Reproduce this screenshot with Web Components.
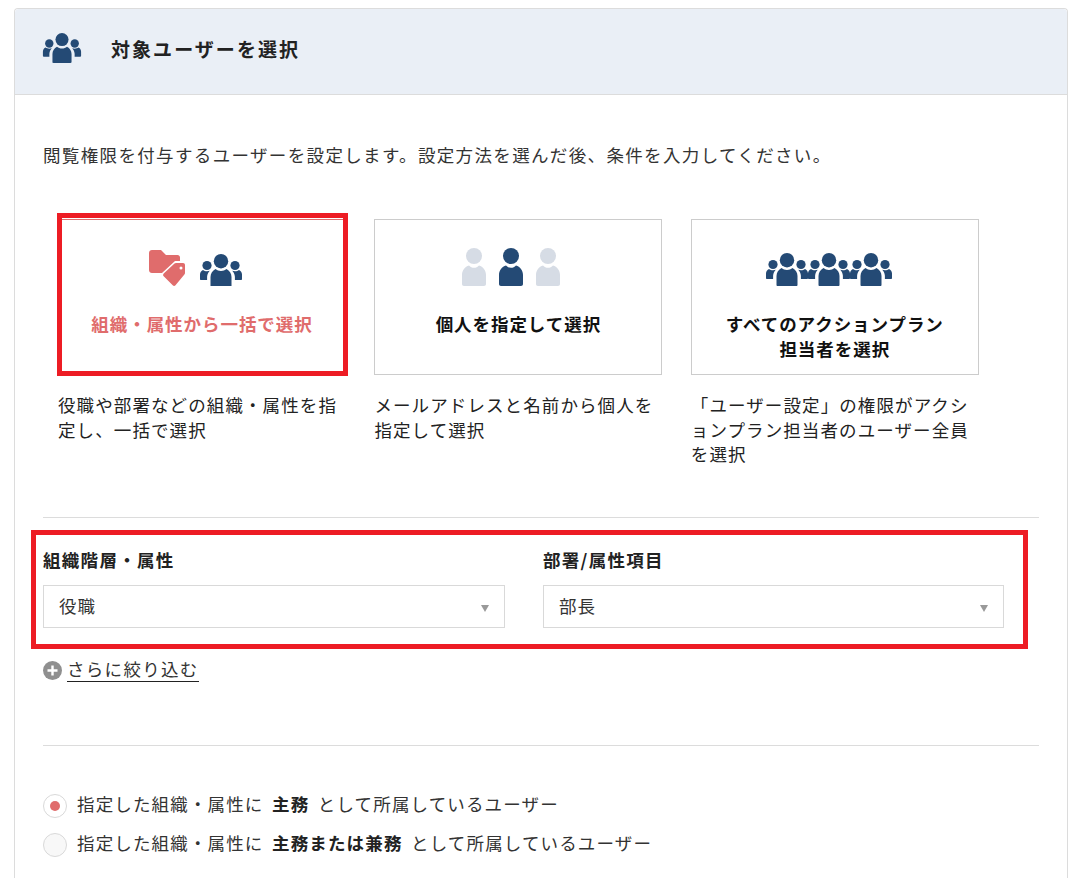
<!DOCTYPE html>
<html lang="ja">
<head>
<meta charset="utf-8">
<title>対象ユーザーを選択</title>
<style>
  html, body { margin: 0; padding: 0; background: #fff; height: 878px; overflow: hidden; }
  body { font-family: "Noto Sans CJK JP", "Noto Sans", sans-serif; color: #222; }
</style>
</head>
<body>
<user-select-panel></user-select-panel>

<script>
const FONT = '"Noto Sans CJK JP", "Noto Sans", sans-serif';

const PERSON = `<circle cx="12" cy="8" r="8"/><path d="M0 36V27c0-4.500 3-8.500 7-9.500 1.500 1.500 3 2.300 5 2.300s3.500-.8 5-2.300c4 1 7 5 7 9.500v9c0 1.200-.8 2-2 2H2c-1.200 0-2-.8-2-2z"/>`;

// group of three: one big person, two smaller behind it (42 x 33 box)
function groupOf3(x) {
  return `<g transform="translate(${x},0)">
    <circle cx="7" cy="11.500" r="4.600"/>
    <circle cx="35" cy="11.500" r="4.600"/>
    <path d="M0 25v-4.500c0-2.300 1.300-3.800 3-4.500 1 .8 2.500 1.300 4 1.300 1 0 2-.2 2.800-.5-1.600 1.600-2.500 3.700-2.700 6V26H1c-.6 0-1-.4-1-1z"/>
    <path d="M42 25v-4.500c0-2.300-1.300-3.800-3-4.500-1 .8-2.500 1.300-4 1.300-1 0-2-.2-2.800-.5 1.600 1.600 2.500 3.700 2.700 6V26H41c.6 0 1-.4 1-1z"/>
    <circle cx="21" cy="7.200" r="7.200"/>
    <path d="M10.500 32v-9c0-3.500 2-6.500 5-8 1.500 1.300 3.300 2 5.500 2s4-.7 5.500-2c3 1.500 5 4.500 5 8v9c0 .6-.5 1-1 1h-19c-.5 0-1-.4-1-1z"/>
  </g>`;
}

const ICONS = {
  header: `<svg width="40" height="30" viewBox="0 0 42 33" fill="#244a75">${groupOf3(0)}</svg>`,
  org: `<svg width="94" height="36" viewBox="0 0 94 36">
      <path fill="#e06c6c" d="M0 3C0 1.300 1.300 0 3 0h9l5 5h11.500C30 5 31 6 31 7.500V11h-5L13 23H3C1.300 23 0 21.700 0 20z"/>
      <path fill="#e06c6c" fill-rule="evenodd" d="M27 13h7c1.200 0 2 .8 2 2v8c0 .6-.2 1-.6 1.400L26.500 35.300c-.8.900-2 .9-2.800 0l-9-9c-.8-.8-.8-2 0-2.800L25.500 13.500c.4-.3.9-.5 1.500-.5zM32 16.500a1.500 1.500 0 1 0 0 3 1.500 1.500 0 0 0 0-3z"/>
      <g fill="#244a75" transform="translate(51,4)">${groupOf3(0)}</g>
    </svg>`,
  single: `<svg width="98" height="38" viewBox="0 0 98 38">
      <g fill="#d6dce5">${PERSON}</g>
      <g fill="#244a75" transform="translate(37,0)">${PERSON}</g>
      <g fill="#d6dce5" transform="translate(74,0)">${PERSON}</g>
    </svg>`,
  all: `<svg width="126" height="33" viewBox="0 0 126 33" fill="#244a75">
      ${groupOf3(0)}${groupOf3(42)}${groupOf3(84)}
    </svg>`
};
const ICON_SHIFT = { org: -13, single: -15, all: -11 };

class PlanCard extends HTMLElement {
  constructor() {
    super();
    const active = this.hasAttribute('active');
    const icon = this.getAttribute('icon');
    this.attachShadow({ mode: 'open' });
    this.shadowRoot.innerHTML = `
      <style>
        :host { display: flex; flex-direction: column; width: 288px; position: relative; font-family: ${FONT}; }
        .box {
          box-sizing: border-box;
          height: 156px;
          border: 1px solid ${active ? '#e06c6c' : '#ccc'};
          display: flex;
          flex-direction: column;
          align-items: center;
          padding-top: 28px;
        }
        .icon { height: 38px; display: flex; align-items: flex-end; justify-content: center; margin-left: ${ICON_SHIFT[icon]}px; }
        .title {
          margin-top: 25px;
          font-size: 17.500px;
          font-weight: 700;
          line-height: 25px;
          letter-spacing: .95px;
          text-align: center;
          color: ${active ? '#e06c6c' : '#111'};
        }
        .note { margin: 18px 0 0; font-size: 17.500px; line-height: 24.500px; letter-spacing: 1.100px; color: #222; }
        .mark { position: absolute; left: -1px; top: -6px; width: 291px; height: 163px; box-sizing: border-box; border: 5px solid #ed1c24; }
      </style>
      <div class="box">
        <div class="icon">${ICONS[icon]}</div>
        <div class="title"><slot name="title"></slot></div>
      </div>
      <p class="note"><slot></slot></p>
      ${active ? '<div class="mark"></div>' : ''}
    `;
  }
}

class SelectField extends HTMLElement {
  constructor() {
    super();
    this.attachShadow({ mode: 'open' });
    this.shadowRoot.innerHTML = `
      <style>
        :host { display: flex; flex-direction: column; font-family: ${FONT}; }
        label { font-size: 17.500px; font-weight: 700; line-height: 22px; letter-spacing: 1.300px; color: #222; }
        .select {
          box-sizing: border-box;
          margin-top: 14px;
          height: 43px;
          border: 1px solid #d9d9d9;
          display: flex;
          align-items: center;
          justify-content: space-between;
          padding: 0 15px 3px 15px;
          font-size: 17.500px;
          letter-spacing: 1.100px;
          color: #333;
        }
        .arrow { width: 0; height: 0; border: 4px solid transparent; border-top: 7px solid #999; border-bottom: 0; margin-top: 6px; }
      </style>
      <label>${this.getAttribute('label')}</label>
      <div class="select"><span><slot></slot></span><i class="arrow"></i></div>
    `;
  }
}

class RadioRow extends HTMLElement {
  constructor() {
    super();
    const checked = this.hasAttribute('checked');
    this.attachShadow({ mode: 'open' });
    this.shadowRoot.innerHTML = `
      <style>
        :host { display: flex; align-items: center; gap: 10px; height: 39px; font-family: ${FONT}; font-size: 17.500px; letter-spacing: 1.150px; color: #333; }
        .dot {
          box-sizing: border-box;
          width: 24px; height: 24px;
          border-radius: 50%;
          border: 1px solid #d9d9d9;
          background: ${checked ? '#fff' : '#f8f8f8'};
          display: flex; align-items: center; justify-content: center;
          flex: none;
        }
        .dot i { width: 10px; height: 10px; border-radius: 50%; background: #e06c6c; display: ${checked ? 'block' : 'none'}; }
        .text { padding-bottom: 4px; }
        ::slotted(b) { color: #222; margin: 0 8.500px; }
      </style>
      <span class="dot"><i></i></span>
      <span class="text"><slot></slot></span>
    `;
  }
}

class UserSelectPanel extends HTMLElement {
  constructor() {
    super();
    this.attachShadow({ mode: 'open' });
    this.shadowRoot.innerHTML = `
      <style>
        :host { display: block; box-sizing: border-box; width: 1054px; height: 900px; margin: 8px 0 0 14px; border: 1px solid #dcdcdc; border-bottom: 0; border-radius: 4px 4px 0 0; font-family: ${FONT}; color: #222; }
        header { height: 86px; box-sizing: border-box; background: #eaeff6; border-bottom: 1px solid #dcdcdc; display: flex; align-items: center; padding: 0 0 0 27px; border-radius: 4px 4px 0 0; }
        header svg { display: block; margin-top: -7px; }
        h1 { margin: -6px 0 0 29px; font-size: 19px; line-height: 24px; font-weight: 700; letter-spacing: 2.050px; }
        .body { padding: 0 28px; }
        .lead { margin: 48px 0 0; font-size: 17.500px; line-height: 24px; letter-spacing: 1.350px; color: #333; }
        .cards { display: flex; gap: 28.400px; margin: 52px 0 0 15px; height: 298px; }
        hr { border: 0; border-top: 1px solid #dcdcdc; margin: 0; }
        .fields { position: relative; display: grid; grid-template-columns: 462px 461px; column-gap: 38px; margin-top: 31px; height: 79px; }
        .mark { position: absolute; left: -12px; top: -19px; width: 997px; height: 119px; box-sizing: border-box; border: 5px solid #ed1c24; }
        .more { display: flex; align-items: center; gap: 5px; margin-top: 29px; height: 26px; }
        .more svg { display: block; }
        .more span { font-size: 17.500px; line-height: 22px; padding-bottom: 1px; letter-spacing: 1.300px; border-bottom: 1px solid #222; color: #333; }
        .radios { margin-top: 40px; }
      </style>
      <header>
        ${ICONS.header}
        <h1>対象ユーザーを選択</h1>
      </header>
      <div class="body">
        <p class="lead">閲覧権限を付与するユーザーを設定します。設定方法を選んだ後、条件を入力してください。</p>
        <div class="cards">
          <plan-card icon="org" active><span slot="title">組織・属性から一括で選択</span>役職や部署などの組織・属性を指定し、一括で選択</plan-card>
          <plan-card icon="single"><span slot="title">個人を指定して選択</span>メールアドレスと名前から個人を指定して選択</plan-card>
          <plan-card icon="all"><span slot="title">すべてのアクションプラン<br>担当者を選択</span>「ユーザー設定」の権限がアクションプラン担当者のユーザー全員を選択</plan-card>
        </div>
        <hr>
        <div class="fields">
          <select-field label="組織階層・属性">役職</select-field>
          <select-field label="部署/属性項目">部長</select-field>
          <div class="mark"></div>
        </div>
        <div class="more">
          <svg width="19" height="19" viewBox="0 0 19 19"><circle cx="9.500" cy="9.500" r="9.500" fill="#8f8f8f"/><path d="M9.500 4.500v10M4.500 9.500h10" stroke="#fff" stroke-width="2.400"/></svg>
          <span>さらに絞り込む</span>
        </div>
        <hr style="margin-top:62px">
        <div class="radios">
          <radio-row checked>指定した組織・属性に<b>主務</b>として所属しているユーザー</radio-row>
          <radio-row>指定した組織・属性に<b>主務または兼務</b>として所属しているユーザー</radio-row>
        </div>
      </div>
    `;
  }
}

customElements.define('plan-card', PlanCard);
customElements.define('select-field', SelectField);
customElements.define('radio-row', RadioRow);
customElements.define('user-select-panel', UserSelectPanel);
</script>
</body>
</html>
